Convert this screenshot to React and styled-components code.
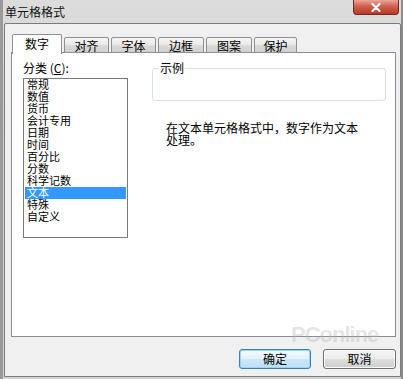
import React from 'react';
import styled, { createGlobalStyle } from 'styled-components';

const GlobalStyle = createGlobalStyle`
  html, body {
    margin: 0;
    padding: 0;
    background: #d6d6d6;
  }
  * {
    box-sizing: border-box;
  }
`;

const font = `'Noto Sans CJK SC', 'Liberation Sans', sans-serif`;
const listFont = `'Liberation Sans', 'Noto Sans CJK SC', sans-serif`;

const Window = styled.div`
  width: 403px;
  height: 379px;
  position: relative;
  display: flex;
  flex-direction: column;
  font-family: ${font};
  font-size: 12px;
  color: #000;
  background: linear-gradient(180deg, #dcdcdc 0%, #cfcfcf 40%, #d2d2d2 100%);
  border-left: 3px solid #9a9a9a;
  border-right: 2px solid #8c8c8c;
  overflow: hidden;
`;

const TitleBar = styled.div`
  height: 23px;
  display: flex;
  align-items: flex-start;
  justify-content: space-between;
  padding-left: 2px;
`;

const Title = styled.div`
  font-size: 12px;
  line-height: 12px;
  margin-top: 6px;
  color: #111;
`;

const CloseButton = styled.div`
  width: 46px;
  height: 15px;
  margin-right: 2px;
  border: 1px solid #6f2b25;
  border-top: none;
  border-radius: 0 0 4px 4px;
  background: linear-gradient(180deg, #e9a89d 0%, #d2604f 45%, #b8382a 100%);
  display: flex;
  align-items: center;
  justify-content: center;
`;

const Cross = styled.svg`
  width: 10px;
  height: 9px;
  display: block;
`;

const Client = styled.div`
  flex: 1;
  margin: 0 0 2px 1px;
  border: 1px solid #7c7c7c;
  border-radius: 2px 2px 0 0;
  background: #f0f0f0;
  padding: 9px 4px 0 6px;
  display: flex;
  flex-direction: column;
`;

const TabStrip = styled.div`
  display: flex;
  align-items: flex-end;
  gap: 2px;
  padding-left: 1px;
  height: 20px;
  position: relative;
  z-index: 1;
`;

const Tab = styled.div`
  width: ${(p) => p.$w}px;
  height: ${(p) => (p.$active ? 20 : 16)}px;
  border: 1px solid #8e9096;
  border-bottom: ${(p) => (p.$active ? 'none' : '1px solid #8e9096')};
  border-radius: 2px 2px 0 0;
  background: ${(p) =>
    p.$active ? '#fff' : 'linear-gradient(180deg, #f5f5f5 0%, #ebebeb 45%, #d9d9d9 55%, #d0d0d0 100%)'};
  text-align: center;
  line-height: ${(p) => (p.$active ? 18 : 16)}px;
  font-size: 12px;
  margin-bottom: ${(p) => (p.$active ? -1 : 0)}px;
`;

const Panel = styled.div`
  height: 285px;
  background: #fff;
  border: 1px solid #898c95;
  margin-top: -1px;
  display: flex;
  padding: 9px 9px 0 11px;
  gap: 24px;
`;

const LeftColumn = styled.div`
  width: 105px;
  display: flex;
  flex-direction: column;
`;

const FieldLabel = styled.div`
  line-height: 12px;
  height: 16px;
`;

const ListBox = styled.div`
  height: 160px;
  border: 1px solid #7a7a7a;
  padding: 0 1px;
`;

const ListItem = styled.div`
  font-family: ${listFont};
  line-height: 12px;
  height: 12px;
  font-size: 11px;
  padding-left: 2px;
  white-space: nowrap;
  background: ${(p) => (p.$selected ? '#3399ff' : 'transparent')};
  color: ${(p) => (p.$selected ? '#fff' : '#000')};
`;

const RightColumn = styled.div`
  flex: 1;
  display: flex;
  flex-direction: column;
`;

const GroupBox = styled.fieldset`
  margin: 0;
  height: 39px;
  padding: 0 6px;
  border: 1px solid #d5dfe5;
  border-radius: 3px;
`;

const Legend = styled.legend`
  padding: 0 1px;
  line-height: 12px;
  font-size: 12px;
`;

const Description = styled.div`
  margin-top: 21px;
  padding-left: 14px;
  line-height: 12px;
  width: 215px;
`;

const ButtonRow = styled.div`
  display: flex;
  justify-content: flex-end;
  gap: 12px;
  margin-top: 12px;
`;

const Button = styled.div`
  width: ${(p) => p.$w}px;
  height: 20px;
  border-radius: 3px;
  border: 1px solid ${(p) => (p.$default ? '#3c7fb1' : '#707070')};
  background: ${(p) =>
    p.$default
      ? 'linear-gradient(180deg, #f4fafe 0%, #e3f1fb 48%, #cde7f7 52%, #bfe0f5 100%)'
      : 'linear-gradient(180deg, #f4f4f4 0%, #ebebeb 48%, #dddddd 52%, #cfcfcf 100%)'};
  box-shadow: ${(p) => (p.$default ? 'inset 0 0 0 1px #9ad4f5' : 'inset 0 0 0 1px #fafafa')};
  text-align: center;
  line-height: 18px;
  font-size: 12px;
`;

const Watermark = styled.div`
  position: absolute;
  left: 288px;
  top: 322px;
  font-family: 'Liberation Sans', sans-serif;
  font-size: 22px;
  font-weight: bold;
  letter-spacing: -1px;
  color: rgba(180, 180, 180, 0.35);
  pointer-events: none;
`;

const tabs = [
  { label: '数字', w: 50, active: true },
  { label: '对齐', w: 45 },
  { label: '字体', w: 45 },
  { label: '边框', w: 46 },
  { label: '图案', w: 46 },
  { label: '保护', w: 43 },
];

const categories = [
  '常规',
  '数值',
  '货币',
  '会计专用',
  '日期',
  '时间',
  '百分比',
  '分数',
  '科学记数',
  '文本',
  '特殊',
  '自定义',
];

const App = () => {
  return (
    <>
      <GlobalStyle />
      <Window>
        <TitleBar>
          <Title>单元格格式</Title>
          <CloseButton>
            <Cross viewBox="0 0 10 9">
              <path d="M1.5 1 L8.5 8 M8.5 1 L1.5 8" stroke="#fff" strokeWidth="2.2" strokeLinecap="round" />
            </Cross>
          </CloseButton>
        </TitleBar>
        <Client>
          <TabStrip>
            {tabs.map((t) => (
              <Tab key={t.label} $w={t.w} $active={t.active}>
                {t.label}
              </Tab>
            ))}
          </TabStrip>
          <Panel>
            <LeftColumn>
              <FieldLabel>
                分类 (<u>C</u>):
              </FieldLabel>
              <ListBox>
                {categories.map((c) => (
                  <ListItem key={c} $selected={c === '文本'}>
                    {c}
                  </ListItem>
                ))}
              </ListBox>
            </LeftColumn>
            <RightColumn>
              <GroupBox>
                <Legend>示例</Legend>
              </GroupBox>
              <Description>在文本单元格格式中，数字作为文本处理。</Description>
            </RightColumn>
          </Panel>
          <ButtonRow>
            <Button $w={72} $default>
              确定
            </Button>
            <Button $w={73}>取消</Button>
          </ButtonRow>
        </Client>
        <Watermark>PConline</Watermark>
      </Window>
    </>
  );
};

export default App;
